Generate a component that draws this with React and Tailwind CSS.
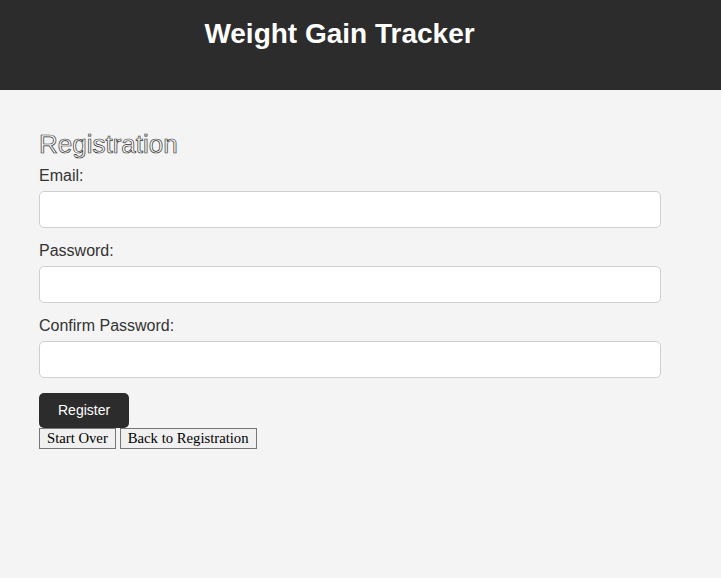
import React from "react";

const Field = ({ label, type }) => (
  <div className="flex flex-col">
    <label className="text-[16px] leading-[18px] text-[#333] mb-[6px]">
      {label}
    </label>
    <input
      type={type}
      className="h-[37px] w-full rounded-[5px] border border-[#cfcfcf] bg-white px-2 outline-none"
    />
  </div>
);

const App = () => {
  return (
    <div
      className="min-h-[578px] bg-[#f4f4f4]"
      style={{ fontFamily: '"Liberation Sans", Arial, sans-serif' }}
    >
      <header className="h-[90px] bg-[#2c2c2c] flex justify-center pr-[42px] pt-[15px]">
        <h1 className="text-[28px] leading-[38px] font-bold text-white">
          Weight Gain Tracker
        </h1>
      </header>

      <main className="pl-[39px] pt-[40px] w-[661px]">
        <h2 className="text-[26px] leading-[28px] text-[#f7f7f7] [-webkit-text-stroke:0.7px_#333] mb-[9px]">
          Registration
        </h2>

        <div className="flex flex-col gap-[14px]">
          <Field label="Email:" type="email" />
          <Field label="Password:" type="password" />
          <Field label="Confirm Password:" type="password" />
        </div>

        <button className="mt-[15px] h-[35px] px-[19px] rounded-[5px] bg-[#2c2c2c] text-white text-[14px]">
          Register
        </button>

        <div
          className="flex gap-[4px]"
          style={{ fontFamily: '"Liberation Serif", "Times New Roman", serif' }}
        >
          <button className="h-[21px] px-[7px] border border-[#767676] bg-[#f0f0f0] text-[14.7px] leading-none text-black">
            Start Over
          </button>
          <button className="h-[21px] px-[7px] border border-[#767676] bg-[#f0f0f0] text-[14.7px] leading-none text-black">
            Back to Registration
          </button>
        </div>
      </main>
    </div>
  );
};

export default App;
